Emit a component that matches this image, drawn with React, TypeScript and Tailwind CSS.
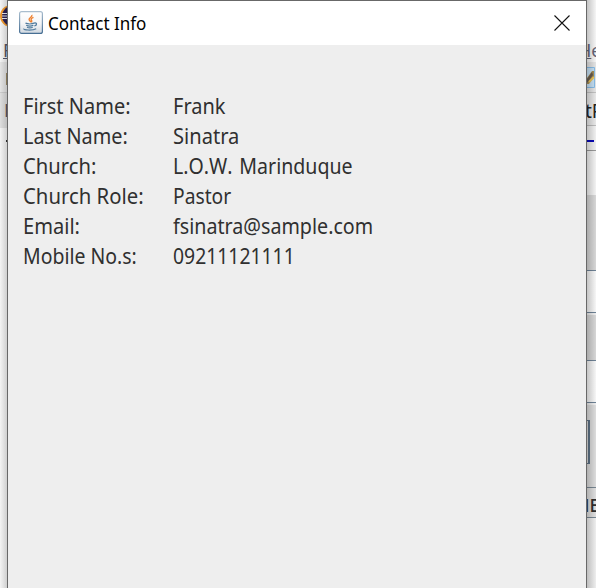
import React from "react";

const rows = [
  { label: "First Name:", value: "Frank", l: "scale-x-[.93]", v: "scale-x-[.93]" },
  { label: "Last Name:", value: "Sinatra", l: "scale-x-[.925]", v: "scale-x-[.935]" },
  { label: "Church:", value: "L.O.W. Marinduque", l: "scale-x-[.94]", v: "scale-x-[.91] [font-kerning:none] [word-spacing:2px]" },
  { label: "Church Role:", value: "Pastor", l: "scale-x-[.945]", v: "scale-x-[.895]" },
  { label: "Email:", value: "fsinatra@sample.com", l: "scale-x-[.935]", v: "scale-x-[.915]" },
  { label: "Mobile No.s:", value: "09211121111", l: "scale-x-[.905]", v: "scale-x-[.9]" },
];

function EclipseIcon() {
  return (
    <svg className="absolute left-0 top-[5px]" width="22" height="22" viewBox="0 0 22 22">
      <circle cx="11" cy="11" r="11" fill="#f39a2b" />
      <circle cx="12" cy="11" r="10" fill="#2c2255" />
      <path d="M2 8.5h12M2 11h12M2 13.5h12" stroke="#eeeef6" strokeWidth="1" />
    </svg>
  );
}

function JavaIcon() {
  return (
    <svg className="shrink-0" width="24" height="24" viewBox="0 0 24 24" fill="none">
      <defs>
        <linearGradient id="tile" x1="0" y1="0" x2="0" y2="1">
          <stop offset="0" stopColor="#fff" />
          <stop offset=".55" stopColor="#f4f5f7" />
          <stop offset="1" stopColor="#cfd7df" />
        </linearGradient>
        <linearGradient id="edge" x1="0" y1="0" x2="0" y2="1">
          <stop offset="0" stopColor="#a9bdce" />
          <stop offset="1" stopColor="#476f94" />
        </linearGradient>
      </defs>
      <rect x=".6" y=".6" width="22.8" height="21.8" rx="2" fill="url(#tile)" stroke="url(#edge)" strokeWidth="1.2" />
      <path d="M12.8 3.8c1.2 2-3.2 3.1-2.7 4.8.2.9 1.4 1.5 1.7 2.6M14.5 6.3c-2 .8-3 1.8-2.1 2.8.7.8.3 1.5-.4 2.1" stroke="#ee8130" strokeWidth="1.4" />
      <path d="M6.5 12.2c2 .8 6.5.8 8.5 0M7.2 14.3c1.8.8 5.5.8 7.2 0M8 16.2c1.5.7 4.2.7 5.7 0M15 12.1c3.4-.9 3.2 2.2.4 2.8M5 17.6c-1.6 1.7 9 2 12.2.1" stroke="#507b9d" strokeWidth="1.25" />
    </svg>
  );
}

function LeftBackdrop() {
  return (
    <div className="relative flex h-[588px] flex-col overflow-hidden bg-[#ececec] text-[18px] text-[#53566a]">
      <div className="h-[62px] shrink-0 bg-[#f4f4f4]" />
      <div className="h-[30px] shrink-0 bg-[#e4e4e4]" />
      <div className="h-px shrink-0 bg-[#cccccc]" />
      <div className="h-[35px] shrink-0 bg-[#dedede]" />
      <div className="grow bg-[#f4f4f4]" />
      <EclipseIcon />
      <span className="absolute left-[3px] top-[38px] leading-[24px] underline">F</span>
      <div className="absolute left-[6px] top-[73px] h-[12px] w-px bg-[#9b8b67]" />
      <span className="absolute left-[4px] top-[98px] leading-[24px]">E</span>
      <div className="absolute left-[6px] top-[140px] h-[2px] w-px bg-[#333]" />
      <div className="absolute inset-0 bg-gradient-to-r from-transparent to-black/15" />
    </div>
  );
}

function RightBackdrop() {
  return (
    <div className="relative flex h-[588px] flex-col overflow-hidden bg-[#ededed] text-[#303030]">
      <div className="h-[62px] shrink-0 bg-[#f5f5f5]" />
      <div className="h-[30px] shrink-0 bg-[#e4e4e4]" />
      <div className="h-px shrink-0 bg-[#c2c2c2]" />
      <div className="h-[32px] shrink-0 bg-[#e8e8e8]" />
      <div className="h-px shrink-0 bg-[#bcbcbc]" />
      <div className="h-[24px] shrink-0 bg-[#f0f0f0]" />
      <div className="h-px shrink-0 bg-[#999]" />
      <div className="h-[44px] shrink-0 bg-[#f2f2f2]" />
      <div className="h-[75px] shrink-0 bg-[#d6d6d6]" />
      <div className="h-[43px] shrink-0 border-y border-[#6e8296] bg-[#f6f6f6]" />
      <div className="h-[2px] shrink-0 bg-[#eee]" />
      <div className="h-[45px] shrink-0 bg-[#d6d6d6]" />
      <div className="h-[43px] shrink-0 border-y border-[#6e8296] bg-[#f6f6f6]" />
      <div className="h-[2px] shrink-0 bg-[#eee]" />
      <div className="h-[82px] shrink-0 bg-[#dcdcdc]" />
      <div className="h-[31px] shrink-0 border-y border-[#788692] bg-[#dedede]" />
      <div className="grow bg-[#eee]" />
      <span className="absolute left-[-9px] top-[38px] text-[18px] leading-[24px] text-[#646477]"><u>H</u>e</span>
      <svg className="absolute left-0 top-[67px]" width="9" height="21" viewBox="0 0 9 21">
        <path d="M0 .5h7.5v20H0" fill="#c6e0f4" stroke="#86bce7" />
        <path d="M0 11 5 4h2v6l-5 7H0z" fill="#a58d55" />
        <path d="m0 12 5-7 1 3-6 8z" fill="#665b50" />
        <path d="m2 15 5-5" stroke="#ecc65c" strokeWidth="2" />
      </svg>
      <span className="absolute left-[-2px] top-[99px] text-[19px] leading-[24px] text-[#222]">tP</span>
      <div className="absolute left-0 top-[140px] h-[2px] w-[7px] bg-[#0808b8]" />
      <div className="absolute left-0 top-[420px] h-[44px] w-[3px] border-y border-r-2 border-[#5d7286]" />
      <span className="absolute left-[-14px] top-[493px] text-[18px] font-medium leading-[24px]">ME</span>
      <div className="absolute inset-0 bg-gradient-to-r from-black/20 to-transparent" />
    </div>
  );
}

export default function App() {
  return (
    <div className="grid h-[588px] w-[596px] grid-cols-[7px_580px_9px] overflow-hidden bg-white font-['Noto_Sans',sans-serif]">
      <LeftBackdrop />
      <main className="flex h-[588px] flex-col border-x border-t border-[#686868] bg-[#eeeeee]">
        <header className="flex h-[44px] shrink-0 items-center bg-white pl-[11px] pr-[16px]">
          <JavaIcon />
          <div className="ml-[5px] grow">
            <h1 className="w-max origin-left scale-x-[.945] text-[18px] leading-6 text-black">Contact Info</h1>
          </div>
          <button aria-label="Close" className="block">
            <svg width="16" height="16" viewBox="0 0 16 16" stroke="#111" strokeWidth="1.1">
              <path d="m.5.5 15 15m0-15-15 15" />
            </svg>
          </button>
        </header>
        <dl className="mt-[46px] pl-[15px] text-[21.5px] text-[#303030]">
          {rows.map((row) => (
            <div key={row.label} className="flex h-[30px] items-center whitespace-nowrap leading-[30px]">
              <dt className="w-[150px]">
                <span className={`inline-block origin-left ${row.l}`}>{row.label}</span>
              </dt>
              <dd className={`origin-left ${row.v}`}>{row.value}</dd>
            </div>
          ))}
        </dl>
      </main>
      <RightBackdrop />
    </div>
  );
}
